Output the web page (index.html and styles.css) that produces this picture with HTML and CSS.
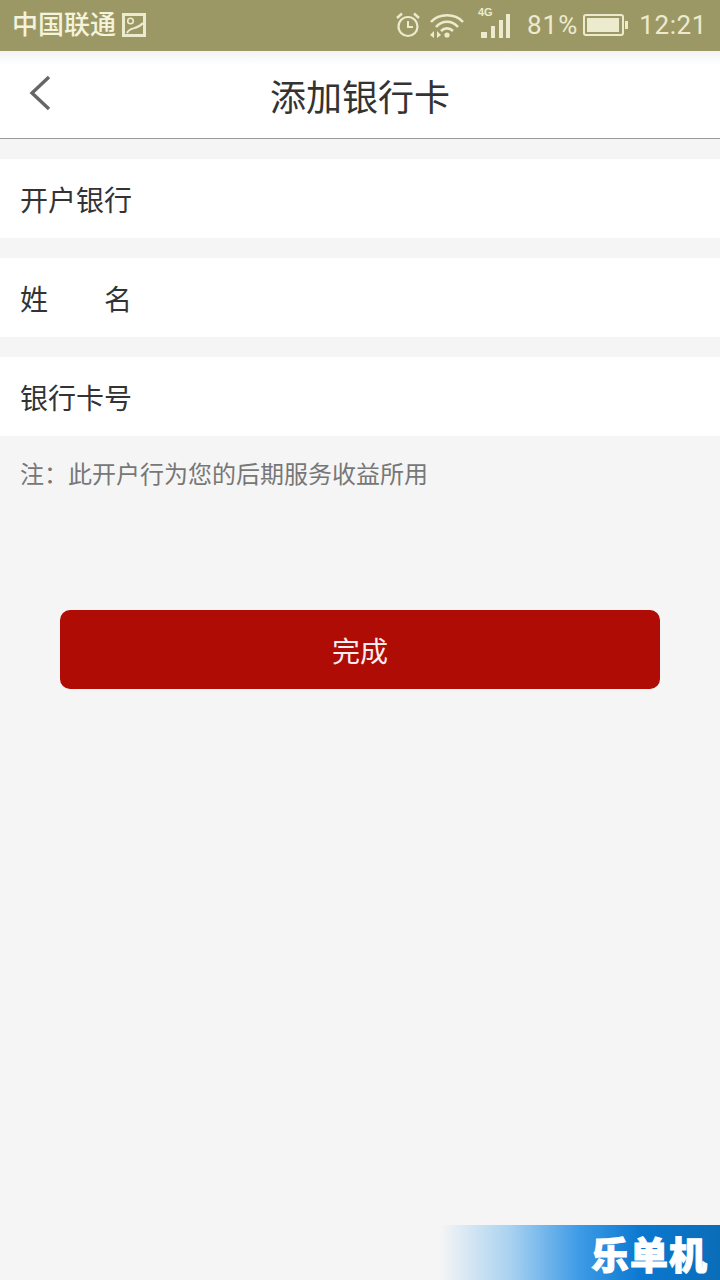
FILE: index.html
```html
<!DOCTYPE html>
<html>
<head>
  <meta charset="UTF-8" />
  <title>添加银行卡</title>
  <link rel="stylesheet" href="styles.css">
</head>
<body>
  <div class="statusbar">
    <div class="status-left">
      <span class="carrier">中国联通</span>
      <svg class="pic-icon" width="24" height="24" viewBox="0 0 24 24">
        <rect x="1.500" y="1.500" width="21" height="21" fill="none" stroke="#ecebcd" stroke-width="3"/>
        <circle cx="8.500" cy="8" r="2.800" fill="none" stroke="#ecebcd" stroke-width="1.600"/>
        <path d="M5 20 C8 13 14 18 21 10" fill="none" stroke="#ecebcd" stroke-width="2"/>
      </svg>
    </div>
    <div class="status-right">
      <svg class="alarm" width="26" height="28" viewBox="0 0 26 28">
        <circle cx="13" cy="15.500" r="9.500" fill="none" stroke="#ecebcd" stroke-width="2.200"/>
        <path d="M13 10 V16 H18" fill="none" stroke="#ecebcd" stroke-width="2"/>
        <path d="M2 7 L7 2.500 M24 7 L19 2.500" fill="none" stroke="#ecebcd" stroke-width="2.400"/>
      </svg>
      <svg class="wifi" width="36" height="26" viewBox="0 0 36 26">
        <path d="M2 10 C10 1 26 1 34 10 M7 15 C13 8 23 8 29 15 M12 19 C15.500 15.500 20.500 15.500 24 19" fill="none" stroke="#ecebcd" stroke-width="2.600"/>
        <circle cx="18" cy="23" r="2.600" fill="#ecebcd"/>
        <path d="M5 19 L1 23 L5 26 Z M8 19 L12 23 L8 26 Z" fill="#ecebcd"/>
      </svg>
      <div class="signal">
        <span class="net">4G</span>
        <svg width="30" height="26" viewBox="0 0 30 26">
          <rect x="0" y="19" width="6" height="6" fill="#ecebcd"/>
          <rect x="10" y="13" width="4" height="12" fill="#ecebcd"/>
          <rect x="18" y="7" width="4" height="18" fill="#ecebcd"/>
          <rect x="25" y="1" width="4" height="24" fill="#ecebcd"/>
        </svg>
      </div>
      <span class="pct">81%</span>
      <svg class="battery" width="46" height="24" viewBox="0 0 46 24">
        <rect x="1" y="2" width="39" height="20" rx="2" fill="none" stroke="#ecebcd" stroke-width="2"/>
        <rect x="4" y="5" width="32" height="14" fill="#ecebcd"/>
        <rect x="42" y="8" width="3" height="8" fill="#ecebcd"/>
      </svg>
      <span class="time">12:21</span>
    </div>
  </div>

  <div class="titlebar">
    <svg class="back" width="24" height="38" viewBox="0 0 24 38">
      <path d="M21 3 L4 19 L21 35" fill="none" stroke="#666" stroke-width="3.400"/>
    </svg>
    <h1>添加银行卡</h1>
  </div>

  <div class="form">
    <div class="row">开户银行</div>
    <div class="row"><div class="spaced"><span>姓</span><span>名</span></div></div>
    <div class="row last">银行卡号</div>
  </div>
  <p class="note">注：此开户行为您的后期服务收益所用</p>

  <div class="btn-wrap">
    <button class="done">完成</button>
  </div>

  <div class="watermark"><span>乐单机</span></div>
</body>
</html>
```

FILE: styles.css
```css
* {
  box-sizing: border-box;
}
html, body {
  height: 100%;
}
body {
  margin: 0;
  position: relative;
  overflow: hidden;
  background: #f5f5f5;
  font-family: "Noto Sans CJK SC", "Noto Sans", sans-serif;
  color: #333;
}
.statusbar {
  height: 51px;
  background: #9c9866;
  color: #ecebcd;
  display: flex;
  justify-content: space-between;
  align-items: center;
  padding: 0 13px 2px 12px;
}
.status-left, .status-right {
  display: flex;
  align-items: center;
}
.carrier {
  font-size: 26px;
  line-height: 30px;
  font-weight: 500;
  margin-top: -3px;
  color: #f4f3dc;
}
.pic-icon {
  margin-left: 6px;
}
.alarm {
  margin-right: 8px;
}
.wifi {
  margin-right: 10px;
}
.signal {
  position: relative;
  width: 36px;
  height: 38px;
  display: flex;
  align-items: flex-end;
  justify-content: flex-end;
  margin-right: 16px;
  margin-top: -10px;
}
.net {
  position: absolute;
  left: 3px;
  top: 4px;
  font: bold 11px/14px "Liberation Sans", sans-serif;
}
.pct, .time {
  font-family: Roboto, sans-serif;
  font-size: 26px;
}
.pct {
  letter-spacing: 1px;
}
.time {
  letter-spacing: 0.6px;
}
.battery {
  margin-left: 5px;
  margin-right: 10px;
}
.titlebar {
  height: 88px;
  background: linear-gradient(#f2f2f5, #fff 14px);
  border-bottom: 1px solid #999;
  display: flex;
  align-items: center;
  justify-content: center;
  position: relative;
}
.titlebar h1 {
  margin: 0;
  font-size: 36px;
  font-weight: 400;
  line-height: 50px;
  color: #333;
}
.back {
  position: absolute;
  left: 28px;
  top: 23px;
}
.form {
  padding-top: 20px;
}
.row {
  height: 79px;
  background: #fff;
  margin-bottom: 20px;
  padding-left: 20px;
  display: flex;
  align-items: center;
  font-size: 28px;
  color: #333;
}
.row.last {
  margin-bottom: 0;
}
.spaced {
  width: 112px;
  display: flex;
  justify-content: space-between;
}
.note {
  margin: 0;
  padding: 18px 20px 0;
  font-size: 24px;
  line-height: 38px;
  color: #777;
}
.btn-wrap {
  padding: 118px 60px 0;
}
.done {
  display: block;
  width: 100%;
  height: 79px;
  border: none;
  border-radius: 10px;
  background: #af0c05;
  color: #fbeeee;
  font-family: inherit;
  font-size: 28px;
  padding: 0;
}
.watermark {
  position: absolute;
  right: 0;
  bottom: 0;
  width: 280px;
  height: 55px;
  background: linear-gradient(90deg, #f5f5f5 0%, #a9d2f0 25%, #3d9ae6 50%, #0a78d0 72%, #0a6db8 100%);
  display: flex;
  align-items: center;
  justify-content: flex-end;
  padding-right: 12px;
}
.watermark span {
  color: #fff;
  font-size: 38px;
  font-weight: 900;
  line-height: 50px;
  letter-spacing: 1px;
  -webkit-text-stroke: 1px #fff;
}
```
